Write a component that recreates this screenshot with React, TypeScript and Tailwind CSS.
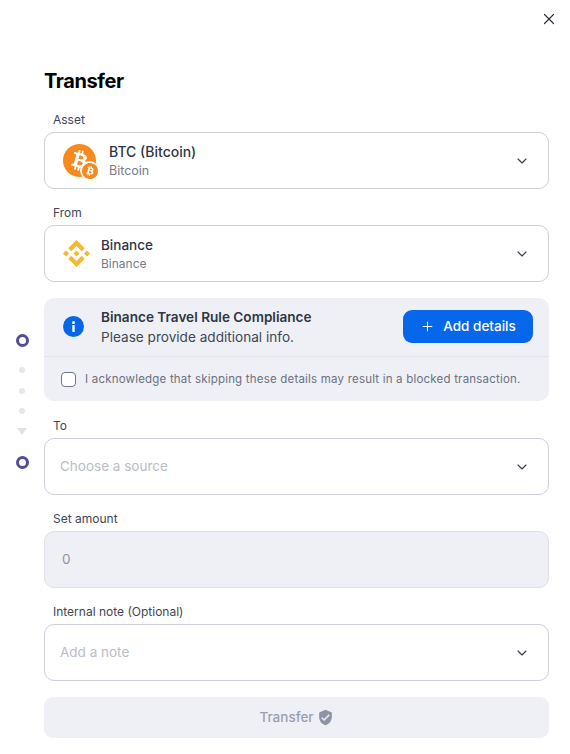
import { ChevronDown, Plus, X } from "lucide-react";
import { SiBinance } from "react-icons/si";
import { MdVerifiedUser } from "react-icons/md";

const Chevron = () => <ChevronDown size={16} strokeWidth={1.75} className="text-[#3a4152] shrink-0" />;

function BitcoinLogo({ size }: { size: number }) {
  return (
    <svg width={size} height={size} viewBox="0 0 64 64">
      <path
        fill="#f7891f"
        d="M63.04 39.741c-4.274 17.143-21.638 27.575-38.783 23.301C7.12 58.768-3.313 41.404.962 24.262 5.234 7.117 22.597-3.317 39.737.957c17.144 4.274 27.576 21.64 23.302 38.784z"
      />
      <path
        fill="#fff"
        d="M46.11 27.441c.636-4.258-2.606-6.547-7.039-8.074l1.438-5.768-3.512-.875-1.4 5.616c-.922-.23-1.87-.447-2.812-.662l1.41-5.653-3.509-.875-1.439 5.766c-.764-.174-1.514-.346-2.242-.527l.004-.018-4.842-1.209-.934 3.75s2.605.597 2.55.634c1.422.355 1.679 1.296 1.636 2.042l-1.638 6.571c.098.025.225.061.365.117l-.371-.092-2.296 9.205c-.174.432-.615 1.08-1.609.834.035.051-2.552-.637-2.552-.637l-1.743 4.019 4.569 1.139c.85.213 1.683.436 2.503.646l-1.453 5.834 3.507.875 1.439-5.772c.958.26 1.888.5 2.798.726l-1.434 5.745 3.511.875 1.453-5.823c5.987 1.133 10.489.676 12.384-4.739 1.527-4.36-.076-6.875-3.226-8.515 2.294-.529 4.022-2.038 4.483-5.155zM38.086 38.69c-1.085 4.36-8.426 2.003-10.806 1.412l1.928-7.729c2.38.594 10.012 1.77 8.878 6.317zm1.086-11.312c-.99 3.966-7.1 1.951-9.082 1.457l1.748-7.01c1.982.494 8.365 1.416 7.334 5.553z"
      />
    </svg>
  );
}

function Field({ label, children, className }: { label: string; children: React.ReactNode; className?: string }) {
  return (
    <div className={className}>
      <label className="block pl-[9px] text-[12px] leading-[15px] text-[#3f4655] mb-[5px]">{label}</label>
      {children}
    </div>
  );
}

function SelectBox({ children }: { children: React.ReactNode }) {
  return (
    <div className="h-[57px] rounded-[10px] border border-[#ccd0d9] bg-white flex items-center justify-between pr-[18px]">
      {children}
      <Chevron />
    </div>
  );
}

function RailRing() {
  return <div className="w-[13px] h-[13px] rounded-full border-[3px] border-[#4f4f94]" />;
}

function RailDot() {
  return <div className="w-[6px] h-[6px] rounded-full bg-[#e6e7ec]" />;
}

export default function App() {
  return (
    <div className="w-[570px] h-[754px] bg-white overflow-hidden" style={{ fontFamily: "Inter, 'Liberation Sans', sans-serif" }}>
      <div className="flex justify-end pt-[10px] pr-[12px]">
        <X size={18} strokeWidth={1.6} className="text-[#2b303b]" />
      </div>
      <div className="flex">
        <div className="w-[44px] shrink-0 flex flex-col items-center pt-[306px]">
          <RailRing />
          <div className="flex flex-col items-center gap-[14.5px] mt-[20px]">
            <RailDot />
            <RailDot />
            <RailDot />
          </div>
          <div className="mt-[14px] w-0 h-0 border-l-[5px] border-r-[5px] border-t-[7px] border-l-transparent border-r-transparent border-t-[#e2e3e9]" />
          <div className="mt-[21px]">
            <RailRing />
          </div>
        </div>
        <div className="w-[505px] shrink-0">
          <h1 className="text-[20px] leading-[24px] font-bold text-black mt-[41px] mb-[19px] tracking-[-0.4px]">Transfer</h1>

          <Field label="Asset">
            <SelectBox>
              <div className="flex items-center pl-[18px]">
                <div className="relative w-[33px] h-[33px]">
                  <BitcoinLogo size={33} />
                  <div className="absolute left-[17px] top-[17px] w-[19px] h-[19px] rounded-full bg-white flex items-center justify-center">
                    <BitcoinLogo size={16} />
                  </div>
                </div>
                <div className="ml-[13px] pt-[1px]">
                  <div className="text-[14px] leading-[18px] font-medium text-[#2f3645]">BTC (Bitcoin)</div>
                  <div className="text-[12.5px] leading-[19px] text-[#767c8c]">Bitcoin</div>
                </div>
              </div>
            </SelectBox>
          </Field>

          <Field label="From" className="mt-[16px]">
            <SelectBox>
              <div className="flex items-center pl-[18px]">
                <SiBinance size={27} className="text-[#f3ba2f]" />
                <div className="ml-[11px] pt-[1px]">
                  <div className="text-[13.5px] leading-[18px] font-medium text-[#2f3645]">Binance</div>
                  <div className="text-[12px] leading-[19px] text-[#767c8c]">Binance</div>
                </div>
              </div>
            </SelectBox>
          </Field>

          <div className="mt-[16px] rounded-[10px] bg-[#eff0f5] h-[103px]">
            <div className="h-[59px] flex items-center justify-between border-b border-[#e3e5eb] pl-[19px] pr-[16px] pb-[1px]">
              <div className="flex items-center">
                <svg width="21" height="21" viewBox="0 0 21 21">
                  <circle cx="10.5" cy="10.5" r="10.5" fill="#0667eb" />
                  <rect x="9.3" y="9" width="2.4" height="7" rx="0.6" fill="#fff" />
                  <circle cx="10.5" cy="6.4" r="1.5" fill="#fff" />
                </svg>
                <div className="ml-[17px]">
                  <div className="text-[13.6px] leading-[20px] font-semibold text-[#2f3645]">Binance Travel Rule Compliance</div>
                  <div className="text-[13.6px] leading-[20px] text-[#3f4655]">Please provide additional info.</div>
                </div>
              </div>
              <button className="w-[130px] h-[33px] rounded-[9px] bg-[#0667eb] text-white flex items-center justify-center gap-[8px] text-[13.5px] font-medium">
                <Plus size={15} strokeWidth={1.6} />
                Add details
              </button>
            </div>
            <div className="h-[44px] flex items-center pl-[17px] pt-[1px]">
              <div className="w-[15px] h-[15px] rounded-[4px] border border-[#6f7585] bg-white shrink-0" />
              <span className="ml-[9px] text-[11.5px] text-[#6b7181] tracking-[0.2px] whitespace-nowrap">
                I acknowledge that skipping these details may result in a blocked transaction.
              </span>
            </div>
          </div>

          <Field label="To" className="mt-[17px]">
            <SelectBox>
              <span className="pl-[15px] text-[13.5px] text-[#b9bdc8]">Choose a source</span>
            </SelectBox>
          </Field>

          <Field label="Set amount" className="mt-[16px]">
            <div className="h-[57px] rounded-[10px] border border-[#dfe1e7] bg-[#eff0f5] flex items-center pl-[17px] text-[13.5px] text-[#8e93a1]">0</div>
          </Field>

          <Field label="Internal note (Optional)" className="mt-[16px]">
            <SelectBox>
              <span className="pl-[15px] text-[13.5px] text-[#b9bdc8]">Add a note</span>
            </SelectBox>
          </Field>

          <button className="mt-[16px] w-full h-[41px] rounded-[9px] bg-[#eff0f5] flex items-center justify-center gap-[3px] text-[13.5px] font-medium text-[#9a9faf]">
            Transfer
            <MdVerifiedUser size={17} className="text-[#8f94a4]" />
          </button>
        </div>
      </div>
    </div>
  );
}
